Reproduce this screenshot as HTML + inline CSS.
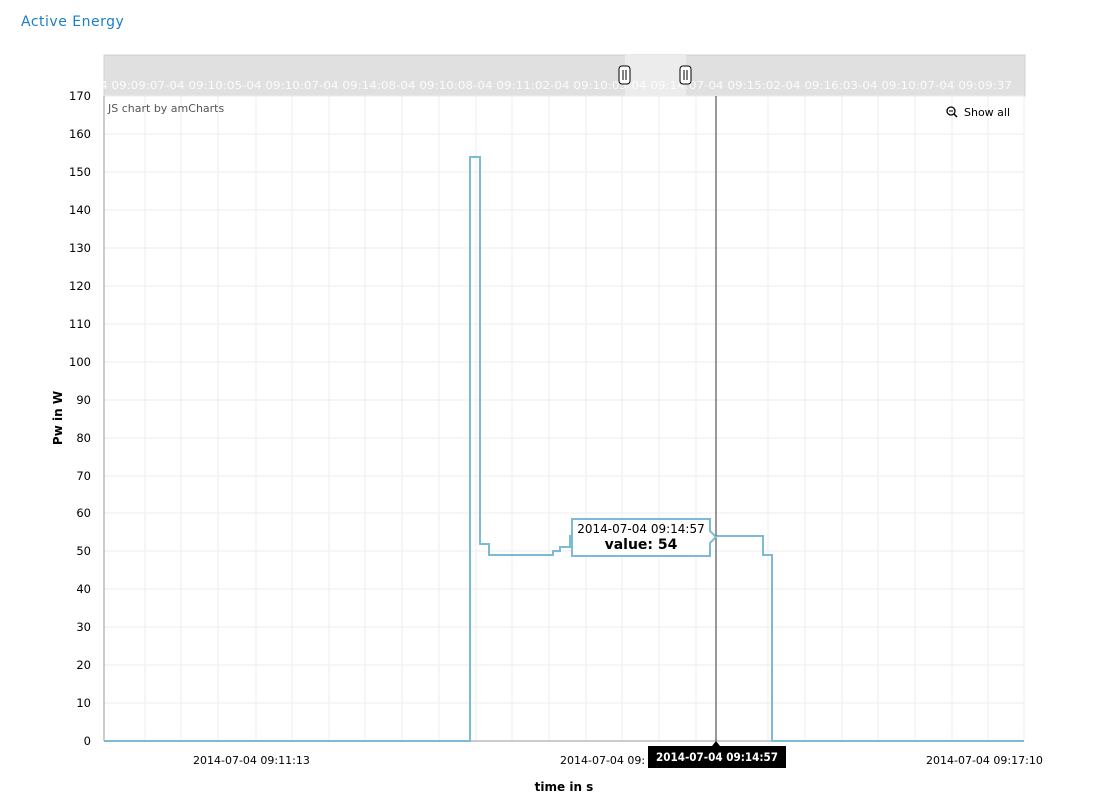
<!DOCTYPE html>
<html><head><style>
body{margin:0;background:#fff;font-family:Verdana,"DejaVu Sans",sans-serif;}
</style></head><body>
<svg width="1108" height="798" xmlns="http://www.w3.org/2000/svg" font-family="Verdana, 'DejaVu Sans', sans-serif">
<text x="21" y="26" font-size="14" fill="#1a7fc4" letter-spacing="0.5">Active Energy</text>
<rect x="104" y="55" width="921" height="41" fill="#e0e0e0" stroke="#d0d0d0"/>
<rect x="625" y="55" width="61" height="41" fill="#ececec"/>
<g font-size="10.5" fill="#fff" opacity="0.9">
<text x="100" y="89" textLength="912" lengthAdjust="spacingAndGlyphs">4 09:09:07-04 09:10:05-04 09:10:07-04 09:14:08-04 09:10:08-04 09:11:02-04 09:10:05-04 09:14:07-04 09:15:02-04 09:16:03-04 09:10:07-04 09:09:37</text>
</g>
<rect x="619" y="66" width="11" height="18" rx="3" fill="#fff" stroke="#000"/>
<line x1="623" y1="70" x2="623" y2="80" stroke="#000"/><line x1="626" y1="70" x2="626" y2="80" stroke="#000"/>
<rect x="680" y="66" width="11" height="18" rx="3" fill="#fff" stroke="#000"/>
<line x1="684" y1="70" x2="684" y2="80" stroke="#000"/><line x1="687" y1="70" x2="687" y2="80" stroke="#000"/>
<g stroke="#eeeeee" stroke-width="1">
<line x1="104" y1="96" x2="1024" y2="96"/>
<line x1="104" y1="134" x2="1024" y2="134"/><line x1="104" y1="172" x2="1024" y2="172"/>
<line x1="104" y1="210" x2="1024" y2="210"/><line x1="104" y1="248" x2="1024" y2="248"/>
<line x1="104" y1="286" x2="1024" y2="286"/><line x1="104" y1="324" x2="1024" y2="324"/>
<line x1="104" y1="362" x2="1024" y2="362"/><line x1="104" y1="400" x2="1024" y2="400"/>
<line x1="104" y1="438" x2="1024" y2="438"/><line x1="104" y1="476" x2="1024" y2="476"/>
<line x1="104" y1="513" x2="1024" y2="513"/><line x1="104" y1="551" x2="1024" y2="551"/>
<line x1="104" y1="589" x2="1024" y2="589"/><line x1="104" y1="627" x2="1024" y2="627"/>
<line x1="104" y1="665" x2="1024" y2="665"/><line x1="104" y1="703" x2="1024" y2="703"/>
<line x1="145" y1="96" x2="145" y2="741"/><line x1="181" y1="96" x2="181" y2="741"/>
<line x1="218" y1="96" x2="218" y2="741"/><line x1="256" y1="96" x2="256" y2="741"/>
<line x1="292" y1="96" x2="292" y2="741"/><line x1="329" y1="96" x2="329" y2="741"/>
<line x1="365" y1="96" x2="365" y2="741"/><line x1="402" y1="96" x2="402" y2="741"/>
<line x1="439" y1="96" x2="439" y2="741"/><line x1="476" y1="96" x2="476" y2="741"/>
<line x1="512" y1="96" x2="512" y2="741"/><line x1="549" y1="96" x2="549" y2="741"/>
<line x1="586" y1="96" x2="586" y2="741"/><line x1="622" y1="96" x2="622" y2="741"/>
<line x1="659" y1="96" x2="659" y2="741"/><line x1="696" y1="96" x2="696" y2="741"/>
<line x1="768" y1="96" x2="768" y2="741"/><line x1="805" y1="96" x2="805" y2="741"/>
<line x1="842" y1="96" x2="842" y2="741"/><line x1="878" y1="96" x2="878" y2="741"/>
<line x1="915" y1="96" x2="915" y2="741"/><line x1="952" y1="96" x2="952" y2="741"/>
<line x1="988" y1="96" x2="988" y2="741"/><line x1="1024" y1="96" x2="1024" y2="741"/>
</g>
<line x1="104" y1="96" x2="104" y2="741" stroke="#999"/>
<line x1="104" y1="741" x2="1024" y2="741" stroke="#999"/>
<g font-size="11.5" fill="#000" text-anchor="end">
<text x="91" y="100">170</text><text x="91" y="138">160</text><text x="91" y="176">150</text>
<text x="91" y="214">140</text><text x="91" y="252">130</text><text x="91" y="290">120</text>
<text x="91" y="328">110</text><text x="91" y="366">100</text><text x="91" y="404">90</text>
<text x="91" y="442">80</text><text x="91" y="480">70</text><text x="91" y="517">60</text>
<text x="91" y="555">50</text><text x="91" y="593">40</text><text x="91" y="631">30</text>
<text x="91" y="669">20</text><text x="91" y="707">10</text><text x="91" y="745">0</text>
</g>
<text x="62" y="418" font-size="12" font-weight="bold" text-anchor="middle" transform="rotate(-90 62 418)">Pw in W</text>
<text x="108" y="112" font-size="11" fill="#555">JS chart by amCharts</text>
<circle cx="951" cy="111" r="4" fill="none" stroke="#000" stroke-width="1.3"/>
<line x1="954" y1="114" x2="957" y2="117" stroke="#000" stroke-width="1.5"/>
<line x1="949" y1="111" x2="953" y2="111" stroke="#000"/>
<text x="964" y="116" font-size="11">Show all</text>
<path d="M104,741 H470 V157 H480 V544 H489 V555 H553 V551 H560 V547 H570 V536 H763 V555 H772 V741 H1024" fill="none" stroke="#7dbad3" stroke-width="2"/>
<line x1="716" y1="96" x2="716" y2="741" stroke="#333" stroke-width="1"/>
<path d="M572,519 H710 V531 L716,537 L710,543 V556 H572 Z" fill="#fff" stroke="#7dbad3" stroke-width="2"/>
<text x="641" y="533" font-size="12" text-anchor="middle">2014-07-04 09:14:57</text>
<text x="641" y="549" font-size="14" font-weight="bold" text-anchor="middle">value: 54</text>
<g font-size="11">
<text x="193" y="764">2014-07-04 09:11:13</text>
<text x="560" y="764">2014-07-04 09:</text>
<text x="926" y="764">2014-07-04 09:17:10</text>
</g>
<rect x="648" y="746" width="138" height="22" fill="#000"/>
<path d="M712,746 L716,741 L720,746 Z" fill="#000"/>
<text x="717" y="761" font-size="11.5" font-weight="bold" fill="#fff" text-anchor="middle" textLength="122" lengthAdjust="spacingAndGlyphs">2014-07-04 09:14:57</text>
<text x="564" y="791" font-size="12" font-weight="bold" text-anchor="middle">time in s</text>
</svg>
</body></html>
